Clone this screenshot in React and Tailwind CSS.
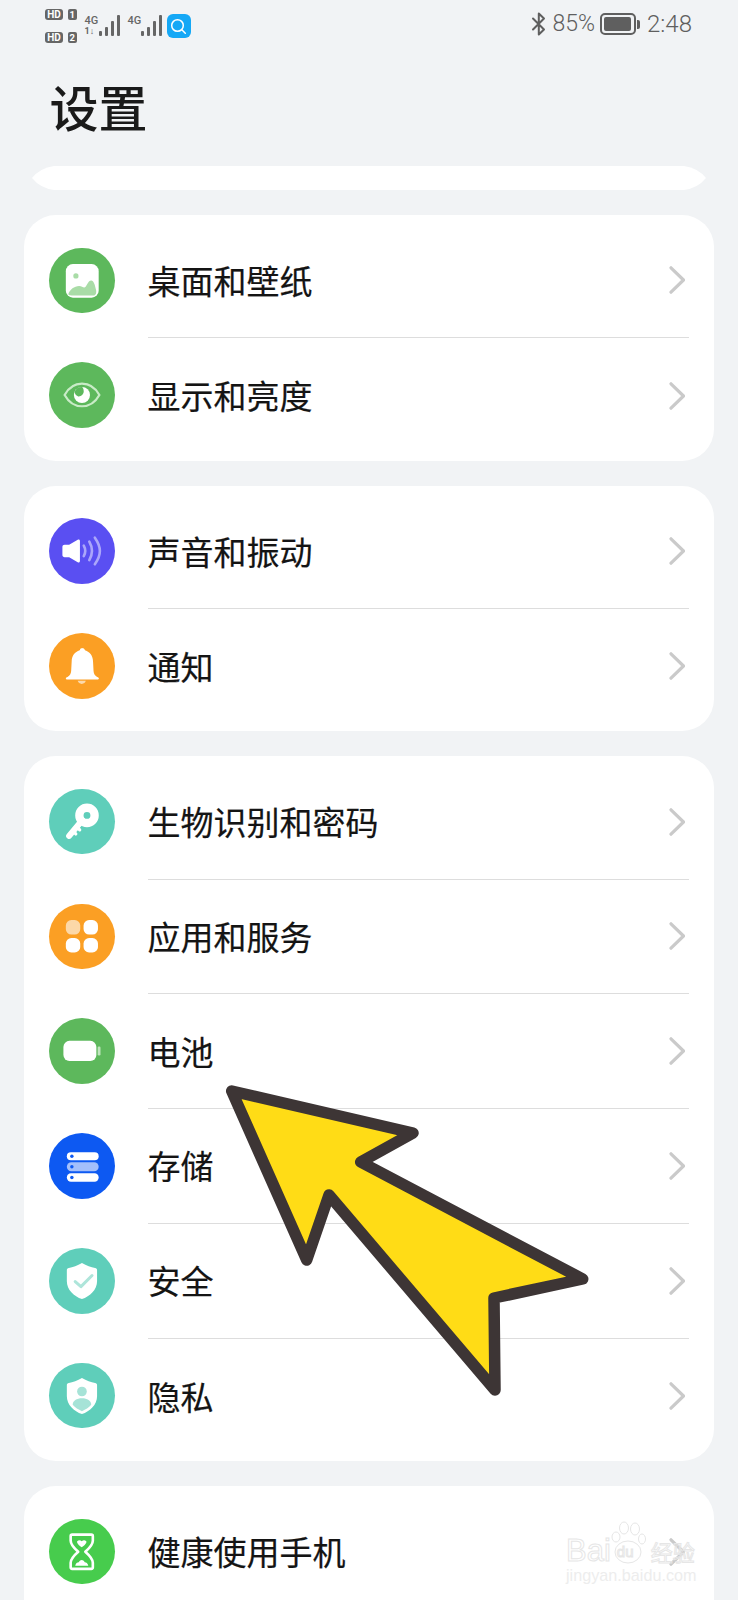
import React from "react";

const Picture = () => (
  <svg viewBox="0 0 65 65" className="w-full h-full">
    <rect x="16.7" y="16" width="32.6" height="33.3" rx="7" fill="#fff" />
    <circle cx="26.7" cy="27.7" r="2.600" fill="#a9dca7" />
    <path d="M19.400 45c1.500-3.500 5.500-7.300 10.500-7.300 2.500 0 3.500 1.500 5 1.500 2.500 0 3.500-7 7-7 2.500 0 3.800 4.500 4.800 9.500 .6 3-.3 5.500-2.500 5.500H22.500c-2.500 0-3.800-.7-3.100-2.200z" fill="#a9dca7" />
  </svg>
);
const Eye = () => (
  <svg viewBox="0 0 65 65" className="w-full h-full">
    <path d="M15.500 32.700C19.500 25.500 25.500 21.500 32.700 21.500S46 25.500 50 32.700C46 39.900 40 43.900 32.700 43.900S19.500 39.900 15.500 32.700z" fill="none" stroke="#c9ebc7" strokeWidth="2.200" />
    <circle cx="32.700" cy="32.700" r="8" fill="#fff" />
    <path d="M25.200 30A8 8 0 0 1 33 24.800A6.500 6.500 0 0 1 34.500 29A5 5 0 0 1 29 34.200A6.500 6.500 0 0 1 25.200 30z" fill="#5db85c" />
  </svg>
);
const Speaker = () => (
  <svg viewBox="0 0 65 65" className="w-full h-full">
    <path d="M15.500 26.500h4.500l8.500-5c1.200-.7 2.200 0 2.200 1.200v20c0 1.200-1 1.900-2.200 1.200l-8.500-5h-4.500c-1.300 0-2.200-.9-2.200-2.200v-8c0-1.300.9-2.200 2.200-2.200z" fill="#fff" />
    <path d="M34.500 27.500c1.800 3.200 1.800 7.200 0 10.400" fill="none" stroke="#aba6fa" strokeWidth="2.600" strokeLinecap="round" />
    <path d="M40 23.500c3.200 5.500 3.200 12.700 0 18.400" fill="none" stroke="#aba6fa" strokeWidth="2.600" strokeLinecap="round" />
    <path d="M45.500 19.500c2.800 4 5 8.500 5 13.200s-2.200 9.200-5 13.200" fill="none" stroke="#aba6fa" strokeWidth="2.600" strokeLinecap="round" />
  </svg>
);
const Bell = () => (
  <svg viewBox="0 0 65 65" className="w-full h-full">
    <path d="M32.700 15c1.500 0 2.500.8 3 2.200 5 1.600 7.800 5.500 8 11l.5 9.500c.2 2.500 1.200 4.500 3.600 6 1.300.3 1.700 1 1.700 1.500s-.6 1-1.500 1H18.200c-.9 0-1.500-.5-1.500-1s.4-1.200 1.700-1.500c2.400-1.500 3.400-3.500 3.600-6l.5-9.500c.2-5.500 3-9.400 8-11 .5-1.400 1.200-2.200 2.700-2.200z" fill="#fff" />
    <path d="M28.500 47.500h8c-.4 2-2 3-4 3s-3.600-1-4-3z" fill="#fcd9ab" />
  </svg>
);
const Key = () => (
  <svg viewBox="0 0 65 65" className="w-full h-full">
    <path d="M33 31L20 46.500" fill="none" stroke="#fff" strokeWidth="6" strokeLinecap="round" />
    <path d="M27.500 37.500l3 3M23.800 41.800l2.800 2.800" fill="none" stroke="#fff" strokeWidth="3.200" strokeLinecap="round" />
    <path fillRule="evenodd" d="M37.700 14.500a11.700 11.700 0 1 1 0 23.400 11.700 11.700 0 0 1 0-23.400zm0 8.300a3.400 3.400 0 1 0 0 6.800 3.400 3.400 0 0 0 0-6.800z" fill="#fff" />
  </svg>
);
const Apps = () => (
  <svg viewBox="0 0 65 65" className="w-full h-full">
    <rect x="16.700" y="16" width="14.300" height="14.300" rx="5.500" fill="#fcd8a8" />
    <rect x="34.300" y="16" width="14.300" height="14.300" rx="5.500" fill="#fff" />
    <rect x="16.700" y="33.800" width="14.300" height="14.300" rx="5.500" fill="#fff" />
    <rect x="34.300" y="33.800" width="14.300" height="14.300" rx="5.500" fill="#fff" />
  </svg>
);
const Battery = () => (
  <svg viewBox="0 0 65 65" className="w-full h-full">
    <rect x="14.300" y="22.700" width="32.700" height="20" rx="6" fill="#fff" />
    <rect x="48.300" y="28.300" width="2.800" height="8.800" rx="1.200" fill="#bfe4bd" />
  </svg>
);
const Storage = () => (
  <svg viewBox="0 0 65 65" className="w-full h-full">
    <rect x="17.700" y="19" width="31.600" height="8" rx="4" fill="#fff" />
    <rect x="17.700" y="29" width="31.600" height="9" rx="4.500" fill="#a3bffb" />
    <rect x="17.700" y="40" width="31.600" height="8.300" rx="4.100" fill="#fff" />
    <circle cx="22.700" cy="23" r="1.700" fill="#0d59f2" />
    <circle cx="22.700" cy="33.500" r="1.700" fill="#0d59f2" />
    <circle cx="22.700" cy="44.200" r="1.700" fill="#0d59f2" />
  </svg>
);
const shield = "M32.700 15c4.500 2.800 9 4.200 13 4.800 1.300.2 2 .9 2 2.200v11c0 8.500-7 15-15 17.700-8-2.700-15-9.200-15-17.700V22c0-1.300.7-2 2-2.200 4-.6 8.500-2 13-4.800z";
const ShieldCheck = () => (
  <svg viewBox="0 0 65 65" className="w-full h-full">
    <path d={shield} fill="#fff" />
    <path d="M26 33.300l5.700 5 11-11" fill="none" stroke="#aee5da" strokeWidth="3" strokeLinecap="round" strokeLinejoin="round" />
  </svg>
);
const ShieldUser = () => (
  <svg viewBox="0 0 65 65" className="w-full h-full">
    <path d={shield} fill="#fff" />
    <circle cx="32.700" cy="28.300" r="4.800" fill="#a6e3d7" />
    <path d="M23.500 41.500c0-4 4-6.500 9.200-6.500s9.200 2.500 9.200 6.500c-2.500 2.700-5.500 4.800-9.200 6.300-3.700-1.500-6.700-3.600-9.200-6.300z" fill="#a6e3d7" />
  </svg>
);
const Hourglass = () => (
  <svg viewBox="0 0 65 65" className="w-full h-full">
    <path d="M23 15.500h19c.9 0 1.500.6 1.500 1.500v4.500c0 4-3.500 7.500-7.500 11 4 3.500 7.500 7 7.500 11V48c0 .9-.6 1.500-1.500 1.500H23c-.9 0-1.500-.6-1.500-1.500v-4.500c0-4 3.500-7.500 7.500-11-4-3.500-7.500-7-7.500-11V17c0-.9.6-1.500 1.500-1.500z" fill="none" stroke="#fff" strokeWidth="2.600" strokeLinejoin="round" />
    <path d="M28 22c1.500-1.500 3.200-1.200 4.500 0 1.300-1.200 3-1.500 4.500 0 .8 1.500-1.500 4-4.500 6-3-2-5.300-4.500-4.500-6z" fill="#fff" />
    <path d="M26 46.500c.5-2.500 2-3.500 3.500-3.500 .8-1.500 2-2.200 3-2.200s2.200.7 3 2.200c1.500 0 3 1 3.500 3.500z" fill="#fff" />
  </svg>
);

const Chevron = () => (
  <svg width="16" height="30" viewBox="0 0 16 30" fill="none" className="shrink-0 mt-[1px]">
    <path d="M2 2.800L14.500 15 2 27.200" stroke="#cacaca" strokeWidth="3.200" strokeLinecap="round" strokeLinejoin="round" />
  </svg>
);

function Row({ icon: Icon, color, label, last }) {
  return (
    <div className="flex items-center h-[114.8px] pl-[25px]">
      <div className={`w-[65.500px] h-[65.500px] rounded-full shrink-0 ${color}`}>
        <Icon />
      </div>
      <div className={`flex-1 h-[116px] ml-[33px] mr-[25px] flex items-center justify-between pr-[4px] ${last ? "" : "border-b border-[#dddddd]"}`}>
        <span className="text-[33px] leading-[44px] text-[#141414] [-webkit-text-stroke:0.2px_#141414]">{label}</span>
        <Chevron />
      </div>
    </div>
  );
}

function Card({ rows, tall }) {
  return (
    <div className={`bg-white rounded-[32px] py-2 shrink-0 ${tall ? "min-h-[200px]" : ""}`}>
      {rows.map((r, i) => (
        <Row key={r.label} {...r} last={i === rows.length - 1} />
      ))}
    </div>
  );
}

const Bars = () => (
  <div className="flex items-end gap-[3px] h-[21px]">
    <div className="w-[3px] h-[5px] bg-[#666666] rounded-[1px]" />
    <div className="w-[3px] h-[9px] bg-[#666666] rounded-[1px]" />
    <div className="w-[3px] h-[15px] bg-[#666666] rounded-[1px]" />
    <div className="w-[3px] h-[21px] bg-[#666666] rounded-[1px]" />
  </div>
);

const HdLine = ({ n }) => (
  <div className="flex items-center gap-[5px] h-[11px]">
    <span className="w-[18px] h-[11px] rounded-[3px] bg-[#666666] text-white text-[10px] leading-[11px] font-bold text-center">HD</span>
    <span className="w-[8.500px] h-[11px] rounded-[2px] bg-[#666666] text-white text-[9.500px] leading-[11px] font-bold text-center">{n}</span>
  </div>
);

export default function App() {
  return (
    <div className="relative h-[1600px] w-[738px] overflow-hidden bg-[#f1f3f5] [font-family:'Noto_Sans_CJK_SC','Noto_Sans',sans-serif]">
      {/* status bar */}
      <div className="flex items-start justify-between pl-[45px] pr-[46px] pt-[9px] h-[45px] text-[#5f5f5f] [font-family:Roboto,'Noto_Sans',sans-serif]">
        <div className="flex items-start">
          <div className="flex flex-col gap-[12px]">
            <HdLine n="1" />
            <HdLine n="2" />
          </div>
          <div className="flex items-end ml-[8px] mt-[6px]">
            <div className="flex flex-col w-[13px] text-[#666666] text-[11px] leading-[11px] font-medium">
              <span>4G</span>
              <span className="text-[9px] leading-[10px] font-bold">1↓</span>
            </div>
            <div className="ml-[1px]"><Bars /></div>
          </div>
          <div className="flex items-end ml-[8px] mt-[6px] h-[21px]">
            <div className="w-[12px] self-start text-[#666666] text-[11px] leading-[11px] font-medium">4G</div>
            <div className="ml-[1px]"><Bars /></div>
          </div>
          <div className="ml-[5px] mt-[5px] w-[24px] h-[24px] rounded-[6px] bg-[#15a8f6] flex items-center justify-center">
            <svg width="17" height="17" viewBox="0 0 17 17" fill="none">
              <circle cx="7.500" cy="7.500" r="5.800" stroke="#fff" strokeWidth="1.500" />
              <path d="M11.800 11.800L15.300 15.300" stroke="#fff" strokeWidth="1.500" strokeLinecap="round" />
            </svg>
          </div>
        </div>
        <div className="flex items-center h-[28px] pt-[2px]">
          <svg width="16" height="24" viewBox="0 0 16 24" fill="none">
            <path d="M2 6.500L13 17.500 7.800 22.500V1.500L13 6.500 2 17.500" stroke="#5f5f5f" strokeWidth="2" strokeLinejoin="round" strokeLinecap="round" />
          </svg>
          <span className="ml-[5px] text-[23px] leading-[28px] font-light">85%</span>
          <div className="ml-[5px] w-[36px] h-[22px] rounded-[5px] border-2 border-[#5f5f5f] p-[2px]">
            <div className="w-[27px] h-full bg-[#5f5f5f] rounded-[2px]" />
          </div>
          <div className="ml-[1px] w-[3px] h-[9px] bg-[#5f5f5f] rounded-r-[2px]" />
          <span className="ml-[7px] text-[24px] leading-[28px] font-light">2:48</span>
        </div>
      </div>

      {/* title */}
      <h1 className="ml-[49.500px] mt-[36px] text-[49px] leading-[50px] font-medium text-[#1a1a1a]">设置</h1>

      {/* collapsed search bar */}
      <div className="ml-[32px] mt-[35px] w-[674px] h-[24px] bg-white [clip-path:path('M22,0_L652,0_Q666,2_674,12_Q666,22_652,24_L22,24_Q8,22_0,12_Q8,2_22,0Z')]" />

      {/* cards */}
      <div className="flex flex-col gap-[25px] ml-[24px] mr-[24.500px] mt-[25px]">
        <Card rows={[
          { icon: Picture, color: "bg-[#5db85c]", label: "桌面和壁纸" },
          { icon: Eye, color: "bg-[#5db85c]", label: "显示和亮度" },
        ]} />
        <Card rows={[
          { icon: Speaker, color: "bg-[#5a4ff2]", label: "声音和振动" },
          { icon: Bell, color: "bg-[#fb9f24]", label: "通知" },
        ]} />
        <Card rows={[
          { icon: Key, color: "bg-[#5fceba]", label: "生物识别和密码" },
          { icon: Apps, color: "bg-[#fb9f24]", label: "应用和服务" },
          { icon: Battery, color: "bg-[#5db85c]", label: "电池" },
          { icon: Storage, color: "bg-[#0d59f2]", label: "存储" },
          { icon: ShieldCheck, color: "bg-[#5fceba]", label: "安全" },
          { icon: ShieldUser, color: "bg-[#5fceba]", label: "隐私" },
        ]} />
        <Card tall rows={[
          { icon: Hourglass, color: "bg-[#47cc4d]", label: "健康使用手机" },
        ]} />
      </div>

      {/* annotation arrow */}
      <svg className="absolute left-0 top-0 pointer-events-none" width="738" height="1600" viewBox="0 0 738 1600">
        <polygon
          points="231.700,1091 413,1133 360.700,1162 582.700,1279 494,1298 495,1390 329,1195 306.700,1260"
          fill="#ffdc16"
          stroke="#3d3535"
          strokeWidth="11.500"
          strokeLinejoin="round"
        />
      </svg>

      {/* watermark */}
      <div className="absolute left-[566px] top-[1520px] w-[132px] h-[68px] pointer-events-none">
        <div className="flex items-end h-[46px]">
          <span className="text-[31px] leading-[30px] text-transparent [-webkit-text-stroke:1px_#e6e6e6] [font-family:'Liberation_Sans',sans-serif]">Bai</span>
          <div className="relative w-[35px] h-[46px] shrink-0">
            <svg className="absolute inset-0" width="35" height="46" viewBox="0 0 35 46" fill="none" stroke="#e6e6e6">
              <ellipse cx="17" cy="32" rx="13" ry="11" />
              <ellipse cx="13" cy="8" rx="4.500" ry="6" />
              <ellipse cx="24" cy="9" rx="4.500" ry="6" />
              <ellipse cx="5" cy="17" rx="4" ry="5" />
              <ellipse cx="31" cy="19" rx="3.500" ry="5" />
            </svg>
            <span className="absolute left-[6px] top-[23px] text-[15px] leading-[18px] text-transparent [-webkit-text-stroke:1px_#e6e6e6] [font-family:'Liberation_Sans',sans-serif]">du</span>
          </div>
          <span className="ml-[5px] text-[22px] leading-[30px] whitespace-nowrap text-transparent [-webkit-text-stroke:1px_#e6e6e6]">经验</span>
        </div>
        <div className="mt-[1px] text-[16.200px] leading-[17px] whitespace-nowrap text-[#ededed] [font-family:'Liberation_Sans',sans-serif]">jingyan.baidu.com</div>
      </div>
    </div>
  );
}
